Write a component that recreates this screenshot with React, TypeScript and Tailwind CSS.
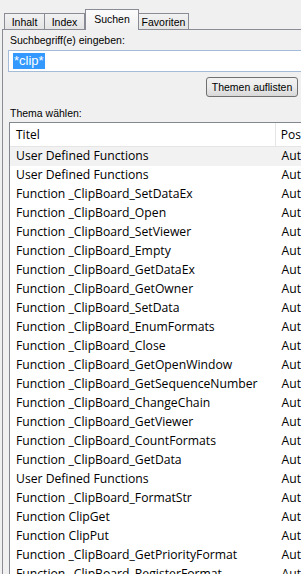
import React from 'react';

const rows = [
  'User Defined Functions',
  'User Defined Functions',
  'Function _ClipBoard_SetDataEx',
  'Function _ClipBoard_Open',
  'Function _ClipBoard_SetViewer',
  'Function _ClipBoard_Empty',
  'Function _ClipBoard_GetDataEx',
  'Function _ClipBoard_GetOwner',
  'Function _ClipBoard_SetData',
  'Function _ClipBoard_EnumFormats',
  'Function _ClipBoard_Close',
  'Function _ClipBoard_GetOpenWindow',
  'Function _ClipBoard_GetSequenceNumber',
  'Function _ClipBoard_ChangeChain',
  'Function _ClipBoard_GetViewer',
  'Function _ClipBoard_CountFormats',
  'Function _ClipBoard_GetData',
  'User Defined Functions',
  'Function _ClipBoard_FormatStr',
  'Function ClipGet',
  'Function ClipPut',
  'Function _ClipBoard_GetPriorityFormat',
  'Function _ClipBoard_RegisterFormat',
];

export default function App() {
  return (
    <div className="w-[301px] h-[574px] overflow-hidden bg-[#f0f0f0] text-black" style={{ fontFamily: '"Liberation Sans", Arial, sans-serif' }}>
      {/* tab strip */}
      <div className="flex items-end pl-[4px] h-[29px] text-[10.5px] leading-[13px]">
        <div className="w-[41px] h-[16px] border border-b-0 border-[#898c95] bg-gradient-to-b from-[#f2f2f2] to-[#e4e4e4] flex items-center justify-center pt-[1px]">
          Inhalt
        </div>
        <div className="w-[40px] h-[16px] border-t border-r border-[#898c95] bg-gradient-to-b from-[#f2f2f2] to-[#e4e4e4] flex items-center justify-center pt-[1px]">
          Index
        </div>
        <div className="relative z-10 mb-[-1px] w-[54px] h-[21px] border border-b-0 border-[#898c95] bg-gradient-to-b from-[#fcfcfc] to-[#f0f0f0] flex justify-center pt-[3px]">
          Suchen
        </div>
        <div className="w-[50px] h-[16px] border-t border-r border-[#898c95] bg-gradient-to-b from-[#f2f2f2] to-[#e4e4e4] flex items-center justify-center pt-[1px]">
          Favoriten
        </div>
      </div>

      {/* tab page */}
      <div className="ml-[2px] border-l border-t border-[#898c95] bg-[#f0f0f0] h-[600px] pl-[5px]">
        <div className="pt-[4px] text-[10.5px] leading-[13px] pl-[2px]">Suchbegriff(e) eingeben:</div>
        <div className="mt-[3px] h-[22px] border border-r-0 border-[#a5bcd8] bg-white flex items-center pl-[4px]">
          <span className="bg-[#3399ff] text-white text-[13px] leading-[16px] px-[1px]">*clip*</span>
        </div>

        <div className="flex justify-end pr-[3px] mt-[5px]">
          <button className="w-[92px] h-[20px] rounded-[3px] border border-[#707070] bg-gradient-to-b from-[#f2f2f2] via-[#ebebeb] to-[#d8d8d8] text-[10.5px] leading-[14px] text-center">
            Themen auflisten
          </button>
        </div>

        <div className="mt-[10px] text-[10.5px] leading-[13px] pl-[2px]">Thema wählen:</div>

        <div className="mt-[2px] ml-[1px] border-l border-t border-[#828790] bg-white" style={{ fontFamily: '"Open Sans", "Noto Sans", sans-serif' }}>
          <div className="flex h-[24px] border-b border-[#e5e5e5] text-[12px]">
            <div className="w-[268px] border-r border-[#e5e5e5] pl-[6px] flex items-center">Titel</div>
            <div className="pl-[5px] flex items-center">Pos</div>
          </div>
          {rows.map((r, i) => (
            <div key={i} className={`flex h-[19px] items-center text-[12.2px] whitespace-nowrap ${i === 0 ? 'bg-[#f2f2f2]' : ''}`}>
              <div className="w-[269px] pl-[6px]">{r}</div>
              <div className="pl-[5px]">Aut</div>
            </div>
          ))}
        </div>
      </div>
    </div>
  );
}
